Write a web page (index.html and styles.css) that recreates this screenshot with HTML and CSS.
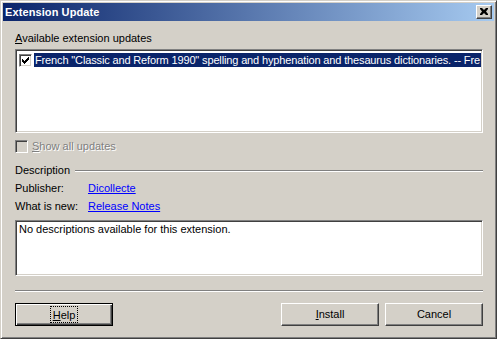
FILE: index.html
```html
<!DOCTYPE html>
<html>
<head>
<meta charset="utf-8">
<link rel="stylesheet" href="styles.css">
</head>
<body>
<div class="window">
  <div class="titlebar">
    <span class="title">Extension Update</span>
    <span class="close"><svg width="8" height="7" viewBox="0 0 8 7"><path d="M0 0h2l2 2 2-2h2v1L6 3.5 8 6v1H6L4 5 2 7H0V6l2-2.5L0 1z" fill="#000"/></svg></span>
  </div>
  <div class="content">
    <div class="label"><u>A</u>vailable extension updates</div>
    <div class="listbox">
      <div class="row">
        <span class="cb"><svg width="7" height="7" viewBox="0 0 7 7"><path d="M0 2h1v1h1v1h1v-1h1v-1h1v-1h1v-1h1v3h-1v1h-1v1h-1v1h-1v1h-1v-1h-1v-1h-1z" fill="#000"/></svg></span>
        <span class="sel">French "Classic and Reform 1990" spelling and hyphenation and thesaurus dictionaries. -- Fre</span>
      </div>
    </div>
    <div class="check disabled"><span class="cb off"></span><span class="ctext"><u>S</u>how all updates</span></div>
    <div class="group"><span>Description</span><span class="rule"></span></div>
    <div class="field first"><span class="key">Publisher:</span><a class="link">Dicollecte</a></div>
    <div class="field"><span class="key">What is new:</span><a class="link">Release Notes</a></div>
    <div class="descbox">No descriptions available for this extension.</div>
    <div class="sep"></div>
    <div class="buttons">
      <div class="btn default"><span class="focus"><u>H</u>elp</span></div>
      <div class="spacer"></div>
      <div class="btn"><span><u>I</u>nstall</span></div>
      <div class="btn"><span>Cancel</span></div>
    </div>
  </div>
</div>
</body>
</html>
```
FILE: styles.css
```css
html, body {
  margin: 0;
  padding: 0;
  background: #D4D0C8;
}
.window {
  width: 497px;
  height: 339px;
  box-sizing: border-box;
  border: 1px solid;
  border-color: #D4D0C8 #404040 #404040 #D4D0C8;
  padding: 2px;
  box-shadow: inset 1px 1px #FFFFFF, inset -1px -1px #808080;
  background: #D4D0C8;
  font-family: "Liberation Sans", Arial, sans-serif;
  font-size: 11px;
  line-height: 13px;
  color: #000;
  display: flex;
  flex-direction: column;
}
.titlebar {
  height: 18px;
  background: linear-gradient(to right, #0A246A, #A6CAF0);
  display: flex;
  align-items: center;
  justify-content: space-between;
  padding: 0 2px 0 2px;
  flex-shrink: 0;
}
.title {
  color: #FFF;
  font-weight: bold;
  font-size: 11px;
  letter-spacing: 0.1px;
}
.close {
  width: 16px;
  height: 14px;
  box-sizing: border-box;
  background: #D4D0C8;
  border: 1px solid;
  border-color: #FFFFFF #404040 #404040 #FFFFFF;
  box-shadow: inset -1px -1px #808080;
  display: flex;
  align-items: center;
  justify-content: center;
  padding: 0 1px 1px 0;
}
.close svg { display: block; }
.content {
  padding: 0 11px 0 12px;
  display: flex;
  flex-direction: column;
}
.label {
  margin-top: 11px;
  height: 13px;
}
.listbox {
  margin-top: 4px;
  height: 84px;
  box-sizing: border-box;
  background: #FFF;
  border: 1px solid;
  border-color: #808080 #FFFFFF #FFFFFF #808080;
  box-shadow: inset 1px 1px #404040, inset -1px -1px #D4D0C8;
  padding: 3px 1px 0 3px;
  overflow: hidden;
}
.row {
  display: flex;
  align-items: center;
  height: 14px;
  white-space: nowrap;
}
.cb {
  width: 13px;
  height: 13px;
  box-sizing: border-box;
  background: #FFF;
  border: 1px solid;
  border-color: #808080 #FFFFFF #FFFFFF #808080;
  box-shadow: inset 1px 1px #404040, inset -1px -1px #D4D0C8;
  display: flex;
  align-items: center;
  justify-content: center;
  flex-shrink: 0;
}
.cb svg { display: block; }
.cb.off { background: #D4D0C8; }
.sel {
  background: #0A246A;
  color: #FFF;
  margin-left: 2px;
  padding-left: 1px;
  height: 14px;
  line-height: 14px;
  flex: 1;
  min-width: 0;
  letter-spacing: -0.14px;
}
.check {
  margin-top: 7px;
  display: flex;
  align-items: center;
  height: 13px;
}
.ctext {
  margin-left: 4px;
}
.disabled .ctext {
  color: #808080;
  text-shadow: 1px 1px #FFFFFF;
}
.group {
  margin-top: 11px;
  display: flex;
  align-items: center;
  height: 13px;
}
.rule {
  flex: 1;
  margin-left: 5px;
  height: 0;
  border-top: 1px solid #808080;
  border-bottom: 1px solid #FFFFFF;
}
.field {
  margin-top: 5px;
  display: flex;
  height: 13px;
}
.key {
  width: 73px;
}
.link {
  color: #0000FF;
  text-decoration: underline;
}
.descbox {
  margin-top: 7px;
  height: 56px;
  box-sizing: border-box;
  background: #FFF;
  border: 1px solid;
  border-color: #808080 #FFFFFF #FFFFFF #808080;
  box-shadow: inset 1px 1px #404040, inset -1px -1px #D4D0C8;
  padding: 2px 3px;
}
.sep {
  margin-top: 14px;
  height: 0;
  border-top: 1px solid #808080;
  border-bottom: 1px solid #FFFFFF;
}
.buttons {
  margin-top: 11px;
  display: flex;
  gap: 6px;
}
.spacer { flex: 1; }
.btn {
  width: 98px;
  height: 23px;
  box-sizing: border-box;
  border: 1px solid;
  border-color: #FFFFFF #404040 #404040 #FFFFFF;
  box-shadow: inset -1px -1px #808080;
  display: flex;
  align-items: center;
  justify-content: center;
  padding-bottom: 1px;
}
.btn.default {
  border: 1px solid #000;
  box-shadow: inset 1px 1px #FFFFFF, inset -1px -1px #404040, inset -2px -2px #808080;
}
.focus {
  outline: 1px dotted #000;
  outline-offset: 0;
  padding: 1px 2px 0 2px;
  line-height: 14px;
}
```
